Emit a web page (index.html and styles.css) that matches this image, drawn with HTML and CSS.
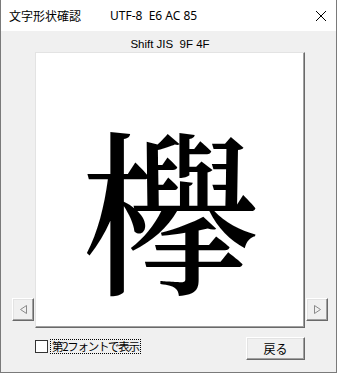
FILE: index.html
```html
<!DOCTYPE html>
<html lang="ja">
<head>
<meta charset="utf-8">
<link rel="stylesheet" href="styles.css">
</head>
<body>
<div class="window">
  <div class="titlebar">
    <span class="title-jp">文字形状確認</span>
    <span class="title-code">UTF-8&nbsp;&nbsp;E6 AC 85</span>
    <svg class="close" width="12" height="12" viewBox="0 0 12 12"><path d="M1 1 L11 11 M11 1 L1 11" stroke="#000" stroke-width="1" fill="none"/></svg>
  </div>
  <div class="client">
    <div class="sjis">Shift JIS&nbsp;&nbsp;9F 4F</div>
    <div class="middle">
      <div class="arrow-btn">
        <svg width="9" height="9" viewBox="0 0 9 9"><path d="M7.5 0.5 L7.5 8.5 L1.5 4.5 Z" stroke="#8a8a8a" stroke-width="1" fill="none"/></svg>
      </div>
      <div class="canvas"><div class="glyph">欅</div></div>
      <div class="arrow-btn">
        <svg width="9" height="9" viewBox="0 0 9 9"><path d="M1.5 0.5 L1.5 8.5 L7.5 4.5 Z" stroke="#8a8a8a" stroke-width="1" fill="none"/></svg>
      </div>
    </div>
    <div class="bottom">
      <div class="check">
        <span class="box"></span>
        <span class="label">第2フォントで表示</span>
      </div>
      <div class="button">戻る</div>
    </div>
  </div>
</div>
</body>
</html>
```

FILE: styles.css
```css
html, body {
  margin: 0;
  padding: 0;
  background: #ffffff;
}
.window {
  width: 337px;
  height: 373px;
  box-sizing: border-box;
  border-left: 1px solid #7a7a7a;
  border-right: 1px solid #7a7a7a;
  border-bottom: 1px solid #7a7a7a;
  display: flex;
  flex-direction: column;
  font-family: "Noto Sans", "Noto Sans CJK JP", sans-serif;
  color: #000;
}
.titlebar {
  height: 31px;
  background: #ffffff;
  display: flex;
  align-items: center;
  padding-left: 8px;
  font-size: 12px;
  font-family: "Noto Sans CJK JP", sans-serif;
}
.title-code {
  margin-left: 29px;
  font-family: "Noto Sans", "Noto Sans CJK JP", sans-serif;
}
.close {
  margin-left: auto;
  margin-right: 9px;
}
.client {
  flex: 1;
  background: #f0f0f0;
  display: flex;
  flex-direction: column;
}
.sjis {
  height: 21px;
  box-sizing: border-box;
  padding-top: 6px;
  padding-left: 3px;
  line-height: 14px;
  font-size: 11.5px;
  text-align: center;
  font-family: "Liberation Sans", sans-serif;
}
.middle {
  display: flex;
  padding-left: 11px;
  gap: 1px;
  height: 276px;
}
.arrow-btn {
  width: 22px;
  height: 23px;
  box-sizing: border-box;
  align-self: flex-end;
  margin-bottom: 7px;
  background: #f0f0f0;
  border-top: 1px solid #ffffff;
  border-left: 1px solid #ffffff;
  border-right: 1px solid #696969;
  border-bottom: 1px solid #696969;
  box-shadow: inset -1px -1px 0 #a0a0a0, inset 1px 1px 0 #e3e3e3;
  display: flex;
  align-items: center;
  justify-content: center;
}
.canvas {
  width: 270px;
  height: 276px;
  box-sizing: border-box;
  background: #ffffff;
  border-top: 1px solid #e3e3e3;
  border-left: 1px solid #e3e3e3;
  border-right: 1px solid #696969;
  border-bottom: 1px solid #696969;
  box-shadow: inset -1px -1px 0 #a0a0a0;
  display: flex;
  justify-content: center;
  align-items: flex-start;
  padding-top: 63px;
}
.glyph {
  font-family: "Noto Serif CJK JP", "Noto Serif CJK SC", "Noto Sans CJK JP", serif;
  font-size: 178px;
  font-weight: 500;
  line-height: 1;
}
.bottom {
  display: flex;
  align-items: flex-start;
  padding-top: 9px;
}
.check {
  display: flex;
  align-items: center;
  margin-left: 34px;
  margin-top: 3px;
}
.box {
  width: 13px;
  height: 13px;
  box-sizing: border-box;
  background: #ffffff;
  border: 1px solid #333333;
}
.label {
  margin-left: 3px;
  font-size: 11.5px;
  line-height: 13px;
  letter-spacing: -1.3px;
  font-family: "Noto Sans CJK JP", sans-serif;
  outline: 1px dotted #000;
  padding: 0 1px;
}
.button {
  margin-left: auto;
  margin-right: 31px;
  width: 59px;
  height: 23px;
  box-sizing: border-box;
  background: #f0f0f0;
  border-top: 1px solid #ffffff;
  border-left: 1px solid #ffffff;
  border-right: 1px solid #696969;
  border-bottom: 1px solid #696969;
  box-shadow: inset -1px -1px 0 #a0a0a0, inset 1px 1px 0 #e3e3e3;
  display: flex;
  align-items: center;
  justify-content: center;
  font-size: 12px;
  font-family: "Noto Sans CJK JP", sans-serif;
}
```
